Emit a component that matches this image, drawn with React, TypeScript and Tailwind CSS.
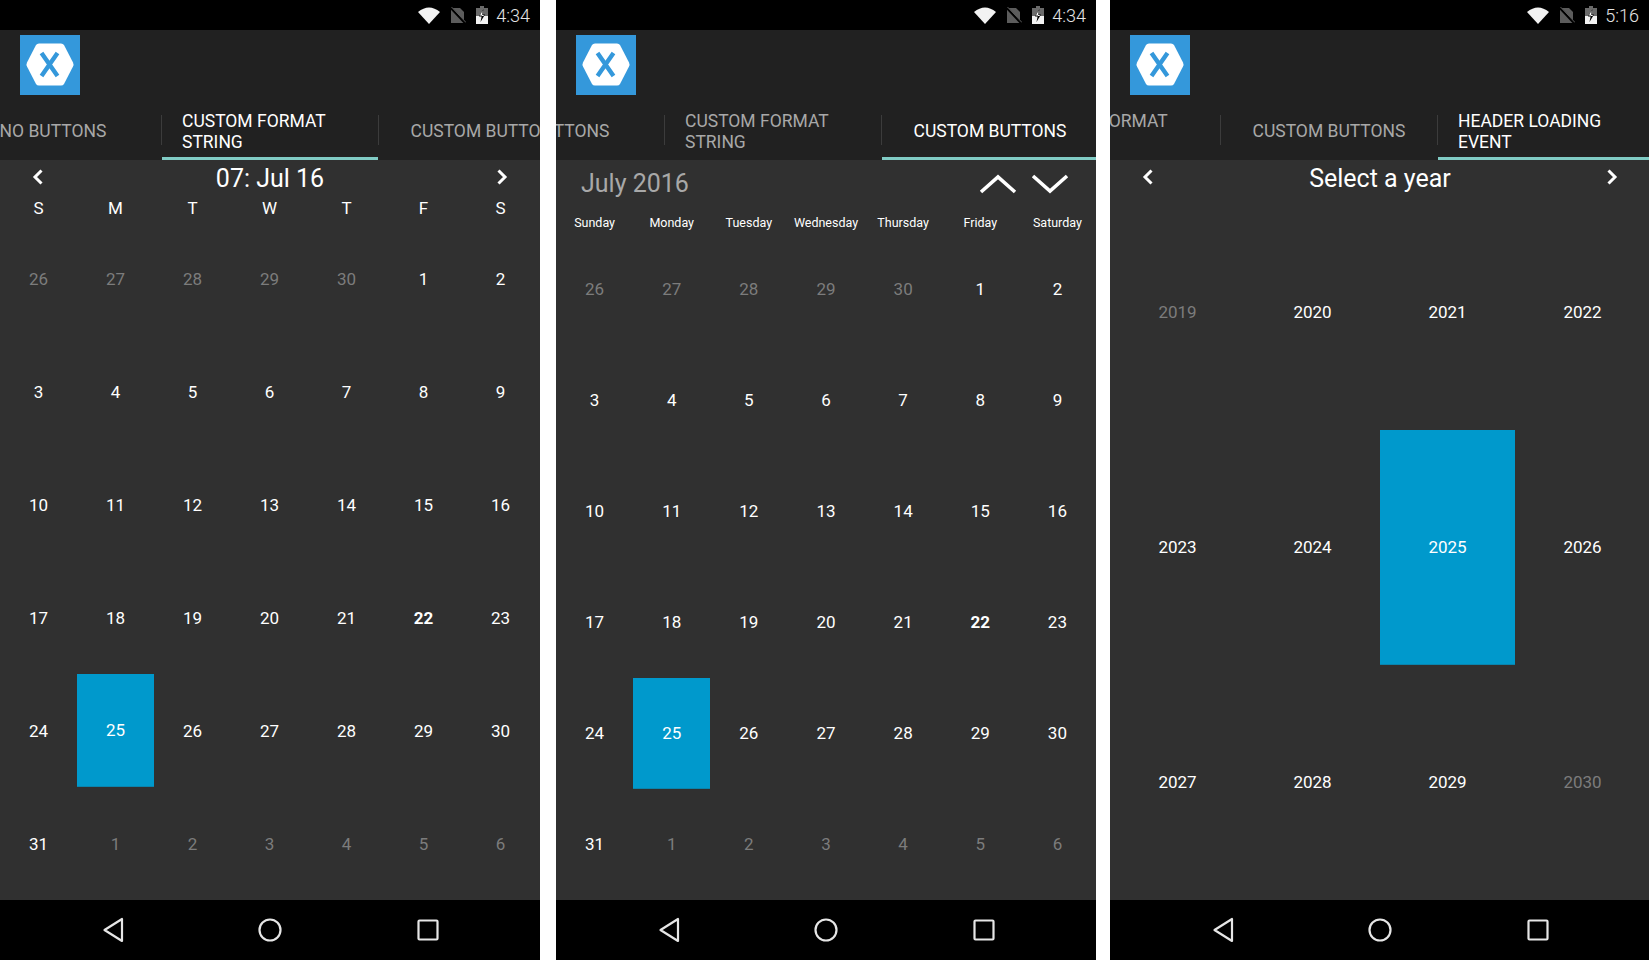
import React from "react";

function Wifi() {
  return (
    <svg width="22" height="17" viewBox="0 0 22 17" className="block">
      <path d="M0 5 Q11 -4 22 5 L11 17 Z" fill="#f2f2f2" />
    </svg>
  );
}

function NoSim() {
  return (
    <svg width="16" height="17" viewBox="0 0 16 17" className="block">
      <path d="M1 1 H10 L14 5 V16 H1 Z" fill="#5c5c5c" />
      <path d="M0 0 L16 17" stroke="#000" strokeWidth="2.4" />
      <path d="M1.5 0 L16 15.5" stroke="#5c5c5c" strokeWidth="1" />
    </svg>
  );
}

function Battery() {
  return (
    <svg width="12" height="18" viewBox="0 0 12 18" className="block">
      <path d="M4 0 H8 V2 H12 V18 H0 V2 H4 Z" fill="#6a6a6a" />
      <path d="M0 10 H12 V18 H0 Z" fill="#f2f2f2" />
      <path d="M7.5 3 L3 10.5 H5.6 L4.5 16 L9 8.5 H6.4 Z" fill="#000" />
      <path d="M6.6 4.5 L3.9 9.6 H5.9 L5.9 10 H7.4 L8 9 H6.2 Z" fill="#fff" />
    </svg>
  );
}

function StatusBar({ time, wide }: { time: string; wide?: boolean }) {
  return (
    <div className={`h-[30px] bg-black flex items-center justify-end ${wide ? "pr-[11px]" : "pr-[10px]"}`}>
      <Wifi />
      <div className="ml-[10px]"><NoSim /></div>
      <div className="ml-[10px]"><Battery /></div>
      <span className="ml-[8px] pt-px text-[18px] font-light leading-[30px] text-[#e4e4e4]">{time}</span>
    </div>
  );
}

function Logo() {
  return (
    <svg width="60" height="60" viewBox="0 0 60 60" className="block">
      <rect width="60" height="60" fill="#3498db" />
      <path
        d="M7 27.5 L16 10 Q17 8.5 19 8.5 H41 Q43 8.5 44 10 L53 27.5 Q54 29.5 53 31.5 L44 49 Q43 50.5 41 50.5 H19 Q17 50.5 16 49 L7 31.5 Q6 29.5 7 27.5 Z"
        fill="#fff"
      />
      <path d="M21.5 18 L37.5 41 M37.5 18 L21.5 41" stroke="#3498db" strokeWidth="4.4" fill="none" />
    </svg>
  );
}

const tabsData = ["NO BUTTONS", "CUSTOM FORMAT STRING", "CUSTOM BUTTONS", "HEADER LOADING EVENT"];

function Tabs({ active, offsetClass }: { active: number; offsetClass: string }) {
  return (
    <div className="h-[60px] overflow-hidden">
      <div className={`flex h-full w-[900px] ${offsetClass}`}>
        {tabsData.map((t, i) => (
          <React.Fragment key={t}>
            {i > 0 && <div className="w-px h-[30px] mt-[15px] bg-[#3c3c3c] shrink-0" />}
            <div
              className={`w-[216px] shrink-0 h-full flex items-center justify-center px-5 pt-[2px] border-y-[3px] border-t-transparent text-[17.5px] font-normal leading-[20.5px] ${
                i === active ? "border-b-[#80cbc4] text-white" : "border-b-transparent text-[#a8a8a8]"
              }`}
            >
              <span className={t.length > 15 ? "w-full block pt-px" : "block"}>{t}</span>
            </div>
          </React.Fragment>
        ))}
      </div>
    </div>
  );
}

function ChevronLeft() {
  return (
    <svg width="12" height="16" viewBox="0 0 12 16" className="block -mt-[2px]">
      <path d="M9.5 1.5 L3 8 L9.5 14.5" stroke="#fff" strokeWidth="3" fill="none" />
    </svg>
  );
}
function ChevronRight() {
  return (
    <svg width="12" height="16" viewBox="0 0 12 16" className="block -mt-[2px]">
      <path d="M2.5 1.5 L9 8 L2.5 14.5" stroke="#fff" strokeWidth="3" fill="none" />
    </svg>
  );
}

function NavBar() {
  return (
    <div className="h-[60px] bg-black flex items-center">
      <svg width="22" height="26" viewBox="0 0 22 26" className="block ml-[102px]">
        <path d="M20 2 V24 L2.5 13 Z" stroke="#e6e6e6" strokeWidth="2.2" strokeLinejoin="round" fill="none" />
      </svg>
      <svg width="24" height="24" viewBox="0 0 24 24" className="block ml-[134px]">
        <circle cx="12" cy="12" r="10.5" stroke="#e6e6e6" strokeWidth="2.2" fill="none" />
      </svg>
      <svg width="24" height="24" viewBox="0 0 24 24" className="block ml-[134px]">
        <rect x="2.5" y="2.5" width="19" height="19" rx="1" stroke="#e6e6e6" strokeWidth="2.2" fill="none" />
      </svg>
    </div>
  );
}

const days: number[] = [26, 27, 28, 29, 30, ...Array.from({ length: 31 }, (_, i) => i + 1), 1, 2, 3, 4, 5, 6];

function DateGrid({ narrow }: { narrow?: boolean }) {
  return (
    <div className={`flex-1 grid grid-cols-7 grid-rows-6 min-h-0 ${narrow ? "mr-px" : ""}`}>
      {days.map((d, i) => {
        const muted = i < 5 || i > 35;
        const selected = i === 29;
        const bold = i === 26;
        return (
          <div
            key={i}
            className={`flex items-center justify-center text-[17px] ${narrow ? "pt-[2px]" : "pt-px"} ${
              selected ? "bg-[#0099cc] border-b border-[#0a84ad] text-white" : ""
            } ${muted ? "text-[#7c7c7c]" : "text-white"} ${bold ? "font-bold" : "font-normal"}`}
          >
            {d}
          </div>
        );
      })}
    </div>
  );
}

function Phone1() {
  return (
    <div className="w-[540px] shrink-0 h-full flex flex-col">
      <StatusBar time="4:34" />
      <div className="bg-[#212121]">
        <div className="h-[70px] pl-5 pt-[5px]"><Logo /></div>
        <Tabs active={1} offsetClass="-ml-[55px]" />
      </div>
      <div className="flex-1 bg-[#303030] flex flex-col min-h-0">
        <div className="h-[35px] flex items-center justify-between px-[32px]">
          <ChevronLeft />
          <span className="text-[25px] pt-[2px] font-normal text-white">07: Jul 16</span>
          <ChevronRight />
        </div>
        <div className="h-[27px] mr-px grid grid-cols-7 text-[17px] font-normal text-white">
          {["S", "M", "T", "W", "T", "F", "S"].map((d, i) => (
            <div key={i} className="flex items-center justify-center">{d}</div>
          ))}
        </div>
        <DateGrid narrow />
      </div>
      <NavBar />
    </div>
  );
}

function Phone2() {
  return (
    <div className="w-[540px] shrink-0 h-full flex flex-col">
      <StatusBar time="4:34" />
      <div className="bg-[#212121]">
        <div className="h-[70px] pl-5 pt-[5px]"><Logo /></div>
        <Tabs active={2} offsetClass="-ml-[108px]" />
      </div>
      <div className="flex-1 bg-[#303030] flex flex-col min-h-0">
        <div className="h-[47px] flex items-center pl-[25px] pr-[27px]">
          <span className="text-[25px] font-normal text-[#a8a8a8] flex-1">July 2016</span>
          <svg width="38" height="20" viewBox="0 0 38 20" className="block">
            <path d="M2 18 L19 3 L36 18" stroke="#fff" strokeWidth="3.6" fill="none" />
          </svg>
          <svg width="38" height="20" viewBox="0 0 38 20" className="block ml-[14px]">
            <path d="M2 2 L19 17 L36 2" stroke="#fff" strokeWidth="3.6" fill="none" />
          </svg>
        </div>
        <div className="h-[27px] pt-[5px] grid grid-cols-7 text-[12.5px] font-normal text-white">
          {["Sunday", "Monday", "Tuesday", "Wednesday", "Thursday", "Friday", "Saturday"].map((d) => (
            <div key={d} className="flex items-center justify-center">{d}</div>
          ))}
        </div>
        <DateGrid />
      </div>
      <NavBar />
    </div>
  );
}

const years = [2019, 2020, 2021, 2022, 2023, 2024, 2025, 2026, 2027, 2028, 2029, 2030];

function Phone3() {
  return (
    <div className="w-[540px] shrink-0 h-full flex flex-col">
      <StatusBar time="5:16" wide />
      <div className="bg-[#212121]">
        <div className="h-[70px] pl-5 pt-[5px]"><Logo /></div>
        <Tabs active={3} offsetClass="-ml-[323px]" />
      </div>
      <div className="flex-1 bg-[#303030] flex flex-col min-h-0">
        <div className="h-[35px] flex items-center justify-between px-[32px]">
          <ChevronLeft />
          <span className="text-[25px] pt-[2px] font-normal text-white">Select a year</span>
          <ChevronRight />
        </div>
        <div className="flex-1 grid grid-cols-4 grid-rows-3 min-h-0">
          {years.map((y) => (
            <div
              key={y}
              className={`flex items-center justify-center pt-px text-[17px] font-normal ${
                y === 2025 ? "bg-[#0099cc] border-b border-[#0a84ad] text-white" : y === 2019 || y === 2030 ? "text-[#7c7c7c]" : "text-white"
              }`}
            >
              {y}
            </div>
          ))}
        </div>
      </div>
      <NavBar />
    </div>
  );
}

export default function App() {
  return (
    <div className="w-[1649px] h-[960px] bg-white flex overflow-hidden font-['Roboto',sans-serif]">
      <Phone1 />
      <div className="w-4 shrink-0" />
      <Phone2 />
      <div className="w-[14px] shrink-0" />
      <Phone3 />
    </div>
  );
}
